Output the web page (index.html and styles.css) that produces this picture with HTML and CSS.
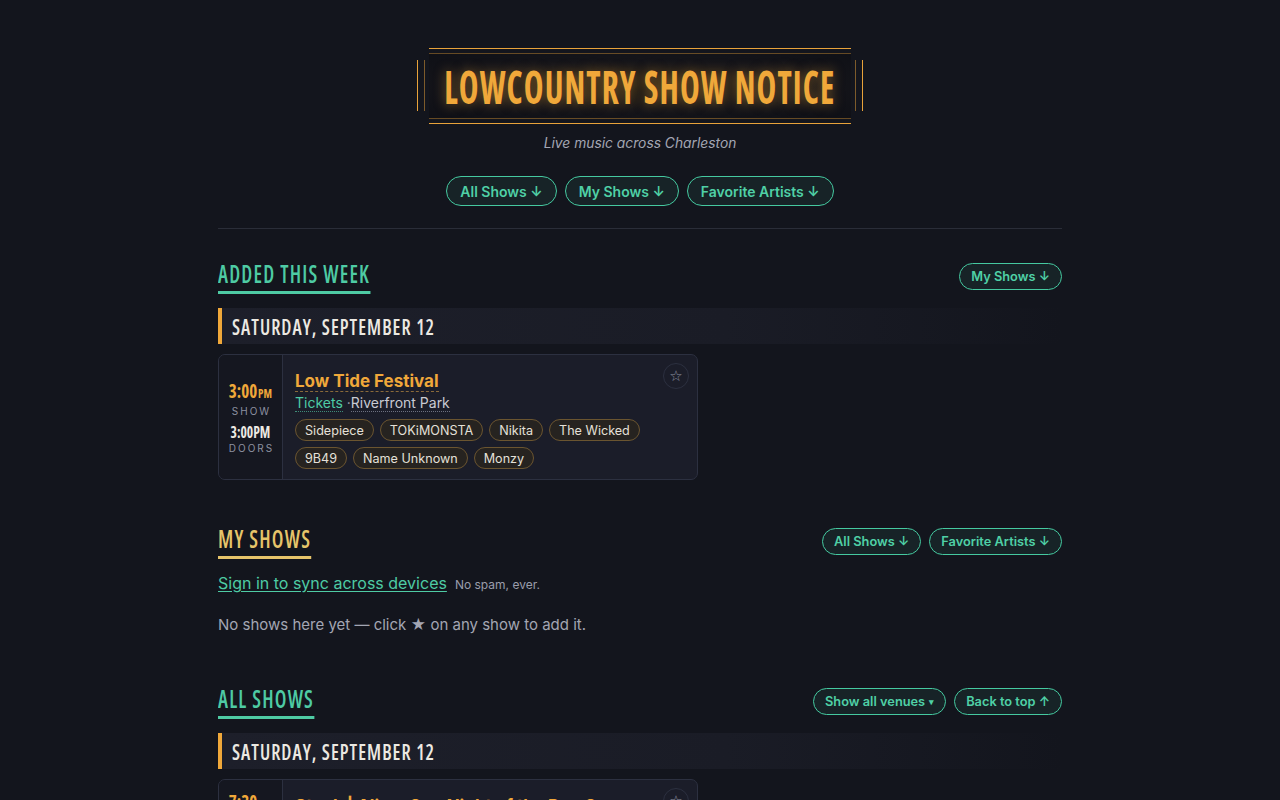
FILE: index.html
```html
<!DOCTYPE html>
<html lang="en">
<head>
<meta charset="utf-8">
<title>Lowcountry Show Notice</title>
<link rel="stylesheet" href="styles.css">
</head>
<body>
<div class="page" id="top">
  <header class="masthead">
    <div class="marquee">
      <h1 class="marquee-box"><span class="marquee-inner"><span class="marquee-text">LOWCOUNTRY SHOW NOTICE</span></span></h1>
    </div>
    <p class="tagline">Live music across Charleston</p>
    <nav class="nav">
      <a class="pill" href="#all">All Shows ↓</a>
      <a class="pill" href="#mine">My Shows ↓</a>
      <a class="pill" href="#fav">Favorite Artists ↓</a>
    </nav>
  </header>

  <section class="section section-added">
    <div class="section-head">
      <h2 class="section-title teal">ADDED THIS WEEK</h2>
      <div class="pills">
        <a class="pill small" href="#mine">My Shows ↓</a>
      </div>
    </div>
    <div class="date-bar"><span class="date-text">SATURDAY, SEPTEMBER 12</span></div>
    <article class="card">
      <div class="times">
        <div class="t-show">3:00<small>PM</small></div>
        <div class="t-label">SHOW</div>
        <div class="t-doors">3:00PM</div>
        <div class="t-label">DOORS</div>
      </div>
      <div class="card-body">
        <button class="star" aria-label="Add to My Shows">☆</button>
        <div class="show-title">Low Tide Festival</div>
        <div class="meta"><a class="tickets" href="#">Tickets</a> <span class="dot">·</span><span class="venue">Riverfront Park</span></div>
        <div class="tags">
          <span class="tag">Sidepiece</span>
          <span class="tag">TOKiMONSTA</span>
          <span class="tag">Nikita</span>
          <span class="tag">The Wicked</span>
          <span class="tag">9B49</span>
          <span class="tag">Name Unknown</span>
          <span class="tag">Monzy</span>
        </div>
      </div>
    </article>
  </section>

  <section class="section section-mine" id="mine">
    <div class="section-head">
      <h2 class="section-title gold">MY SHOWS</h2>
      <div class="pills">
        <a class="pill small" href="#all">All Shows ↓</a>
        <a class="pill small" href="#fav">Favorite Artists ↓</a>
      </div>
    </div>
    <p class="signin"><a href="#">Sign in to sync across devices</a> <span class="nospam">No spam, ever.</span></p>
    <p class="empty">No shows here yet — click ★ on any show to add it.</p>
  </section>

  <section class="section section-all" id="all">
    <div class="section-head">
      <h2 class="section-title teal">ALL SHOWS</h2>
      <div class="pills">
        <a class="pill small" href="#">Show all venues <span class="caret">▾</span></a>
        <a class="pill small" href="#top">Back to top ↑</a>
      </div>
    </div>
    <div class="date-bar"><span class="date-text">SATURDAY, SEPTEMBER 12</span></div>
    <article class="card">
      <div class="times">
        <div class="t-show">7:30<small>PM</small></div>
        <div class="t-label">SHOW</div>
        <div class="t-doors">7:00PM</div>
        <div class="t-label">DOORS</div>
      </div>
      <div class="card-body">
        <button class="star" aria-label="Add to My Shows">☆</button>
        <div class="show-title">Stuck | Alive: One Night of the Day Ones</div>
        <div class="meta"><a class="tickets" href="#">Tickets</a> <span class="dot">·</span><span class="venue">Music Farm</span></div>
        <div class="tags">
          <span class="tag">Stuck Alive</span>
        </div>
      </div>
    </article>
  </section>
</div>
</body>
</html>
```

FILE: styles.css
```css
* { box-sizing: border-box; }
html, body { margin: 0; padding: 0; }
body {
  background: #13151d;
  color: #d9d8d4;
  font-family: Inter, "Noto Sans", "Liberation Sans", sans-serif;
  font-size: 15px;
}
a { color: inherit; text-decoration: none; }
.page {
  width: 844px;
  margin: 0 auto;
  padding-top: 48px;
}

/* masthead */
.masthead {
  display: flex;
  flex-direction: column;
  align-items: center;
  padding-bottom: 22px;
  border-bottom: 1px solid #2a2d38;
}
.marquee {
  position: relative;
  padding: 0 12px;
}
.marquee::before, .marquee::after {
  content: "";
  position: absolute;
  top: 12px;
  bottom: 13px;
  width: 6px;
  border-left: 1px solid #e8a23a;
  border-right: 1px solid rgba(232,162,58,0.5);
}
.marquee::before { left: 0; }
.marquee::after { right: 0; border-left-color: rgba(232,162,58,0.5); border-right-color: #e8a23a; }
.marquee-box {
  margin: 0;
  width: 422px;
  height: 76px;
  padding: 4px 0;
  border-top: 1px solid #e8a23a;
  border-bottom: 1px solid #e8a23a;
  font-weight: normal;
  display: flex;
}
.marquee-inner {
  flex: 1;
  min-width: 0;
  display: flex;
  justify-content: center;
  align-items: center;
  border-top: 1px solid rgba(232,162,58,0.4);
  border-bottom: 1px solid rgba(232,162,58,0.4);
  background: radial-gradient(ellipse at center, #211c15 0%, #15151a 55%, #0f1016 100%);
}
.marquee-text {
  flex: none;
  white-space: nowrap;
  color: #f0a83a;
  font-family: "Open Sans", sans-serif;
  font-stretch: 75%;
  font-weight: 700;
  font-size: 46px;
  line-height: 46px;
  letter-spacing: 1.5px;
  text-shadow: 0 0 14px rgba(240,168,58,0.5);
  transform: scaleX(0.725);
}
.tagline {
  margin: 10px 0 0;
  color: #a3a6b3;
  font-style: italic;
  font-size: 13.8px;
  line-height: 18px;
}
.nav {
  display: flex;
  gap: 8px;
  margin-top: 24px;
}
.pill {
  display: inline-flex;
  align-items: center;
  height: 30px;
  padding: 0 13px;
  border: 1px solid #45c9a0;
  border-radius: 999px;
  background: #172327;
  color: #4fd0a6;
  font-weight: 600;
  font-size: 14px;
  white-space: nowrap;
}
.pill.small {
  height: 27px;
  padding: 0 11px;
  font-size: 12.8px;
}
.caret { font-size: 9px; margin-left: 4px; }

/* sections */
.section-added { padding-top: 30px; }
.section-mine { padding-top: 44px; }
.section-all { padding-top: 50px; }
.section-head {
  display: flex;
  justify-content: space-between;
  align-items: center;
}
.section-title {
  margin: 0;
  padding-bottom: 4px;
  border-bottom: 3px solid currentColor;
  font-family: "Open Sans", sans-serif;
  font-stretch: 75%;
  font-weight: 600;
  font-size: 26px;
  line-height: 28px;
  letter-spacing: 1.5px;
  transform: scaleX(0.79);
  transform-origin: left center;
}
.teal { color: #4ecba4; }
.gold { color: #e6c46a; }
.pills { display: flex; gap: 8px; }

.date-bar {
  margin-top: 14px;
  height: 36px;
  display: flex;
  align-items: center;
  padding-left: 10px;
  border-left: 4px solid #f0a83a;
  background: linear-gradient(90deg, #1d1f2a 0%, #1a1c26 60%, rgba(19,21,29,0) 100%);
}
.date-text {
  color: #ece9e2;
  font-family: "Open Sans", sans-serif;
  font-stretch: 75%;
  font-weight: 600;
  font-size: 22px;
  letter-spacing: 1.2px;
  transform: scaleX(0.86);
  transform-origin: left center;
  white-space: nowrap;
}

.card {
  margin-top: 10px;
  width: 480px;
  display: flex;
  border: 1px solid #2c3040;
  border-radius: 7px;
  background: #1b1d29;
  overflow: hidden;
}
.times {
  width: 64px;
  flex: none;
  background: #151720;
  border-right: 1px solid #2c3040;
  display: flex;
  flex-direction: column;
  align-items: center;
  justify-content: center;
  padding: 10px 0;
}
.t-show {
  color: #f0a83a;
  font-family: "Open Sans", sans-serif;
  font-stretch: 75%;
  font-weight: 700;
  font-size: 20px;
  line-height: 22px;
  transform: scaleX(0.85);
  white-space: nowrap;
}
.t-show small { font-size: 13px; margin-left: 1px; }
.t-doors {
  margin-top: 5px;
  color: #ece9e2;
  font-family: "Open Sans", sans-serif;
  font-stretch: 75%;
  font-weight: 700;
  font-size: 16px;
  line-height: 18px;
  transform: scaleX(0.85);
  white-space: nowrap;
}
.t-label {
  color: #8d91a0;
  font-size: 10px;
  letter-spacing: 2px;
  line-height: 14px;
  margin-right: -2px;
}
.card-body {
  position: relative;
  flex: 1;
  padding: 16px 12px 10px;
}
.star {
  position: absolute;
  top: 8px;
  right: 8px;
  width: 26px;
  height: 26px;
  border-radius: 50%;
  border: 1px solid #2c3040;
  background: #1b1d29;
  color: #8d91a0;
  font-size: 15px;
  line-height: 22px;
  padding: 0;
  font-family: "DejaVu Sans", sans-serif;
}
.show-title {
  display: inline-block;
  color: #f0a83a;
  font-weight: 700;
  font-size: 17px;
  line-height: 20px;
  border-bottom: 1px dashed #8a6a3a;
}
.meta {
  margin-top: 1px;
  font-size: 14px;
  line-height: 19px;
  color: #c9cad2;
}
.tickets {
  color: #4ecba4;
  border-bottom: 1px dotted #3e8c78;
}
.dot { color: #9ea1ae; }
.venue { border-bottom: 1px dotted #6c7080; }
.tags {
  margin-top: 7px;
  display: flex;
  flex-wrap: wrap;
  gap: 6px 6px;
}
.tag {
  display: inline-flex;
  align-items: center;
  height: 22px;
  padding: 0 9px;
  border: 1px solid #6b5530;
  border-radius: 999px;
  background: #262320;
  color: #e4e0d8;
  font-size: 12.6px;
}

.signin {
  margin: 14px 0 0;
  display: flex;
  align-items: baseline;
  gap: 8px;
}
.signin a {
  color: #4ecba4;
  font-size: 16px;
  text-decoration: underline;
  text-underline-offset: 2px;
}
.nospam { color: #9a9dab; font-size: 12px; }
.empty {
  margin: 22px 0 0;
  color: #a3a6b3;
  font-size: 15px;
}
```
